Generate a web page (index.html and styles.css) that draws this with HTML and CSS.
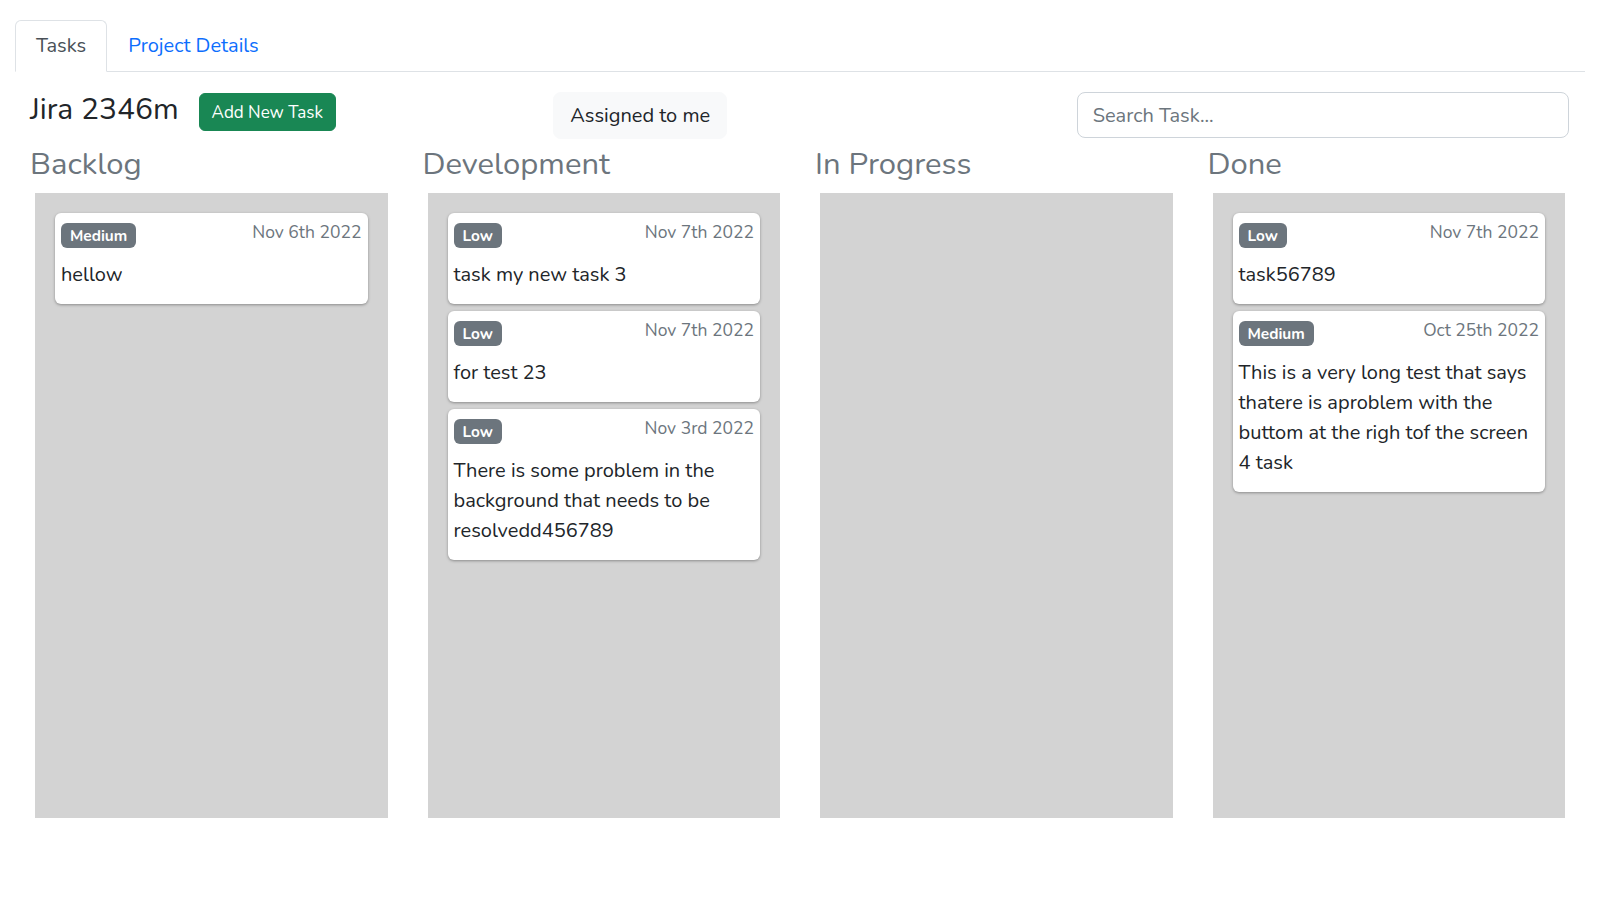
FILE: index.html
```html
<!DOCTYPE html>
<html lang="en">
<head>
<meta charset="utf-8">
<title>Jira 2346m - Tasks</title>
<link rel="stylesheet" href="styles.css">
</head>
<body>
<div class="page">
  <nav class="tabs">
    <a class="tab active">Tasks</a>
    <a class="tab">Project Details</a>
  </nav>

  <div class="toolbar">
    <div class="tcol tcol-title">
      <h3 class="title">Jira 2346m</h3>
      <button class="btn btn-add">Add New Task</button>
    </div>
    <div class="tcol">
      <button class="btn btn-assigned">Assigned to me</button>
    </div>
    <div class="tcol tcol-search">
      <input class="search" type="text" placeholder="Search Task...">
    </div>
  </div>

  <div class="board">
    <section class="column">
      <h2 class="col-title">Backlog</h2>
      <div class="lane">
        <div class="card">
          <div class="card-head"><span class="badge">Medium</span><span class="date">Nov 6th 2022</span></div>
          <p class="card-text">hellow</p>
        </div>
      </div>
    </section>

    <section class="column">
      <h2 class="col-title">Development</h2>
      <div class="lane">
        <div class="card">
          <div class="card-head"><span class="badge">Low</span><span class="date">Nov 7th 2022</span></div>
          <p class="card-text">task my new task 3</p>
        </div>
        <div class="card">
          <div class="card-head"><span class="badge">Low</span><span class="date">Nov 7th 2022</span></div>
          <p class="card-text">for test 23</p>
        </div>
        <div class="card">
          <div class="card-head"><span class="badge">Low</span><span class="date">Nov 3rd 2022</span></div>
          <p class="card-text">There is some problem in the background that needs to be resolvedd456789</p>
        </div>
      </div>
    </section>

    <section class="column">
      <h2 class="col-title">In Progress</h2>
      <div class="lane"></div>
    </section>

    <section class="column">
      <h2 class="col-title">Done</h2>
      <div class="lane">
        <div class="card">
          <div class="card-head"><span class="badge">Low</span><span class="date">Nov 7th 2022</span></div>
          <p class="card-text">task56789</p>
        </div>
        <div class="card">
          <div class="card-head"><span class="badge">Medium</span><span class="date">Oct 25th 2022</span></div>
          <p class="card-text">This is a very long test that says thatere is aproblem with the buttom at the righ tof the screen 4 task</p>
        </div>
      </div>
    </section>
  </div>
</div>
</body>
</html>
```

FILE: styles.css
```css
* { box-sizing: border-box; }

body {
  margin: 0;
  font-family: "Nunito", "Lato", "Noto Sans", sans-serif;
  color: #212529;
  background: #fff;
}

.page {
  padding: 20px 15px 0;
}

/* tabs */
.tabs {
  display: flex;
  border-bottom: 1px solid #dee2e6;
}
.tab {
  font-size: 20px;
  line-height: 30px;
  padding: 10px 20px 10px;
  border: 1px solid transparent;
  border-radius: 6px 6px 0 0;
  margin-bottom: -1px;
  color: #0d6efd;
  text-decoration: none;
  cursor: pointer;
}
.tab.active {
  color: #495057;
  background: #fff;
  border-color: #dee2e6 #dee2e6 #fff;
}

/* toolbar */
.toolbar {
  display: grid;
  grid-template-columns: repeat(3, 1fr);
  margin-top: 20px;
}
.tcol {
  padding: 0 15px;
}
.tcol-title {
  display: flex;
  align-items: flex-start;
  gap: 20px;
}
.tcol-search {
  padding-right: 16px;
}
.title {
  margin: 0;
  padding-top: 1px;
  font-size: 30px;
  font-weight: 400;
  line-height: 1.15;
}
.btn {
  font-family: inherit;
  border-radius: 6px;
  cursor: pointer;
}
.btn-add {
  margin-top: 1px;
  background: #198754;
  border: 1px solid #198754;
  color: #fff;
  font-size: 17px;
  line-height: 24px;
  padding: 7px 12px 5px;
}
.btn-assigned {
  background: #f8f9fa;
  border: 1px solid #f8f9fa;
  color: #212529;
  font-size: 20px;
  line-height: 30px;
  padding: 8px 16px 7px;
  border-radius: 8px;
}
.search {
  display: block;
  width: 100%;
  height: 46px;
  font-family: inherit;
  font-size: 20px;
  padding: 7px 15px;
  border: 1px solid #ced4da;
  border-radius: 8px;
  color: #212529;
  outline: none;
}
.search::placeholder {
  color: #6c757d;
}

/* board */
.board {
  display: grid;
  grid-template-columns: repeat(4, 1fr);
  margin-top: 7px;
}
.column {
  padding: 0 15px;
}
.col-title {
  margin: 0 0 10px;
  font-size: 31px;
  font-weight: 400;
  line-height: 1.2;
  color: #6c757d;
}
.lane {
  margin: 0 5px;
  height: 625px;
  background: #d3d3d3;
  padding: 20px;
}

.card {
  background: #fff;
  border-radius: 6px;
  box-shadow: 0 1px 3px rgba(0, 0, 0, 0.35);
  padding: 10px 6px 14px;
  margin-bottom: 7px;
}
.card-head {
  display: flex;
  justify-content: space-between;
  align-items: flex-start;
}
.badge {
  display: inline-block;
  background: #6c757d;
  color: #fff;
  font-size: 15.4px;
  font-weight: 700;
  height: 25px;
  line-height: 25px;
  padding: 0 9px;
  border-radius: 6px;
}
.date {
  font-size: 17.5px;
  line-height: 1.1;
  color: #6c757d;
}
.card-text {
  margin: 12px 0 0;
  font-size: 20px;
  line-height: 30px;
}
```
